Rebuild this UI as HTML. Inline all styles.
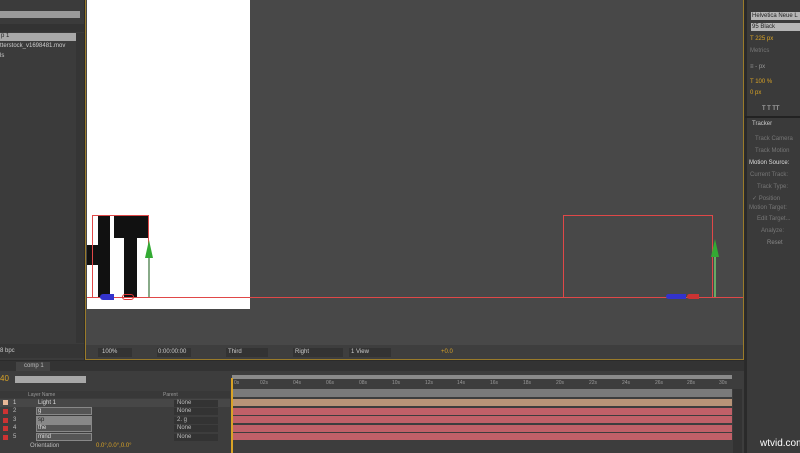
<!DOCTYPE html>
<html><head><style>
*{margin:0;padding:0;box-sizing:border-box}
body{width:800px;height:453px;background:#2b2b2b;position:relative;overflow:hidden;font-family:"Liberation Sans",sans-serif;font-size:6px;color:#bbb}
.a{position:absolute}
.t{position:absolute;white-space:nowrap}
.bar{position:absolute;background:#c06068;height:7px}
.r{position:absolute;color:#999;font-size:5px;top:380px}
</style></head><body>
<!-- project panel -->
<div class="a" style="left:0;top:0;width:84px;height:360px;background:#3b3b3b"></div>
<div class="a" style="left:0;top:11px;width:80px;height:7px;background:#9a9a9a"></div>
<div class="a" style="left:0;top:24px;width:84px;height:8px;background:#333"></div>
<div class="a" style="left:0;top:33px;width:76px;height:8px;background:#a8a8a8"></div>
<div class="t" style="left:1px;top:33px;color:#222">p 1</div>
<div class="t" style="left:0;top:43px;color:#ccc">tterstock_v1698481.mov</div>
<div class="t" style="left:0;top:53px;color:#ccc">ls</div>
<div class="a" style="left:76px;top:33px;width:8px;height:310px;background:#353535"></div>
<div class="a" style="left:0;top:344px;width:84px;height:14px;background:#353535"></div>
<div class="t" style="left:0;top:348px;color:#ccc">8 bpc</div>
<!-- viewer -->
<div class="a" style="left:85px;top:0;width:659px;height:360px;background:#484848;border:1px solid #9a7b2a;border-top:none"></div>
<div class="a" style="left:87px;top:0;width:163px;height:309px;background:#fff"></div>
<!-- HT letters -->
<div class="a" style="left:87px;top:245px;width:12px;height:20px;background:#111"></div>
<div class="a" style="left:98px;top:216px;width:12px;height:82px;background:#111"></div>
<div class="a" style="left:114px;top:216px;width:35px;height:22px;background:#111"></div>
<div class="a" style="left:124px;top:216px;width:13px;height:82px;background:#111"></div>
<div class="a" style="left:92px;top:215px;width:57px;height:83px;border:1px solid #e04848"></div>
<div class="a" style="left:87px;top:297px;width:656px;height:1px;background:#e04848"></div>
<div class="a" style="left:148px;top:250px;width:2px;height:47px;background:#8a8"></div>
<div class="a" style="left:145px;top:240px;width:0;height:0;border-left:4px solid transparent;border-right:4px solid transparent;border-bottom:18px solid #3a3"></div>
<div class="a" style="left:100px;top:294px;width:14px;height:6px;background:#33c;border-radius:3px 0 0 3px"></div>
<div class="a" style="left:122px;top:294px;width:12px;height:6px;border:1px solid #d33;border-radius:3px"></div>
<!-- right box -->
<div class="a" style="left:563px;top:215px;width:150px;height:83px;border:1px solid #e04848"></div>
<div class="a" style="left:714px;top:255px;width:2px;height:42px;background:#6a6"></div>
<div class="a" style="left:711px;top:239px;width:0;height:0;border-left:4px solid transparent;border-right:4px solid transparent;border-bottom:18px solid #3a3"></div>
<div class="a" style="left:666px;top:294px;width:20px;height:5px;background:#33c;border-radius:3px 0 0 3px"></div>
<div class="a" style="left:687px;top:294px;width:12px;height:5px;background:#c33;border-radius:3px 0 0 3px"></div>
<!-- viewer toolbar -->
<div class="a" style="left:86px;top:345px;width:657px;height:14px;background:#3e3e3e"></div>
<div class="a" style="left:98px;top:348px;width:34px;height:9px;background:#333"></div>
<div class="t" style="left:102px;top:349px;color:#ccc">100%</div>
<div class="a" style="left:157px;top:348px;width:34px;height:9px;background:#333"></div>
<div class="t" style="left:158px;top:349px;color:#ccc">0:00:00:00</div>
<div class="a" style="left:226px;top:348px;width:42px;height:9px;background:#333"></div>
<div class="t" style="left:228px;top:349px;color:#ccc">Third</div>
<div class="a" style="left:293px;top:348px;width:50px;height:9px;background:#333"></div>
<div class="t" style="left:295px;top:349px;color:#ccc">Right</div>
<div class="a" style="left:349px;top:348px;width:42px;height:9px;background:#333"></div>
<div class="t" style="left:351px;top:349px;color:#ccc">1 View</div>
<div class="t" style="left:441px;top:349px;color:#d9a326">+0.0</div>
<!-- right panel -->
<div class="a" style="left:745px;top:0;width:55px;height:453px;background:#3a3a3a;border-left:2px solid #2a2a2a"></div>
<div class="a" style="left:751px;top:12px;width:49px;height:8px;background:#b5b5b5"></div>
<div class="t" style="left:752px;top:13px;color:#222">Helvetica Neue L</div>
<div class="a" style="left:751px;top:23px;width:49px;height:8px;background:#b5b5b5"></div>
<div class="t" style="left:752px;top:24px;color:#222">95 Black</div>
<div class="t" style="left:750px;top:36px;color:#d9a326">T 225 px</div>
<div class="t" style="left:750px;top:48px;color:#777">  Metrics</div>
<div class="t" style="left:750px;top:64px;color:#999">≡ - px</div>
<div class="t" style="left:750px;top:79px;color:#d9a326">T 100 %</div>
<div class="t" style="left:750px;top:90px;color:#d9a326">  0 px</div>
<div class="t" style="left:762px;top:106px;color:#ccc">T  T  TT</div>
<div class="a" style="left:745px;top:116px;width:55px;height:2px;background:#222"></div>
<div class="t" style="left:752px;top:121px;color:#ccc">Tracker</div>
<div class="t" style="left:755px;top:136px;color:#777">Track Camera</div>
<div class="t" style="left:755px;top:148px;color:#777">Track Motion</div>
<div class="t" style="left:749px;top:160px;color:#ddd">Motion Source:</div>
<div class="t" style="left:750px;top:172px;color:#777">Current Track:</div>
<div class="t" style="left:757px;top:184px;color:#777">Track Type:</div>
<div class="t" style="left:752px;top:195px;color:#777">✓ Position</div>
<div class="t" style="left:749px;top:205px;color:#777">Motion Target:</div>
<div class="t" style="left:757px;top:216px;color:#777">Edit Target...</div>
<div class="t" style="left:761px;top:228px;color:#777">Analyze:</div>
<div class="t" style="left:767px;top:240px;color:#888">Reset</div>
<div class="t" style="left:760px;top:438px;color:#fff;font-size:10px">wtvid.com</div>
<!-- timeline -->
<div class="a" style="left:0;top:361px;width:744px;height:92px;background:#3d3d3d"></div>
<div class="a" style="left:0;top:361px;width:744px;height:10px;background:#333"></div>
<div class="a" style="left:16px;top:362px;width:34px;height:9px;background:#444"></div>
<div class="t" style="left:24px;top:363px;color:#bbb">comp 1</div>
<div class="t" style="left:0;top:374px;color:#d9a326;font-size:8px">40</div>
<div class="a" style="left:15px;top:376px;width:71px;height:7px;background:#a8a8a8"></div>
<div class="a" style="left:0;top:391px;width:230px;height:7px;background:#383838"></div>
<div class="t" style="left:28px;top:392px;color:#999;font-size:5px">Layer Name</div>
<div class="t" style="left:163px;top:392px;color:#999;font-size:5px">Parent</div>
<div class="a" style="left:0;top:399px;width:230px;height:8px;background:#474747"></div>
<div class="a" style="left:3px;top:400px;width:5px;height:5px;background:#e8b898"></div>
<div class="t" style="left:13px;top:400px;color:#ccc">1</div>
<div class="t" style="left:38px;top:400px;color:#ddd">Light 1</div>
<div class="a" style="left:3px;top:409px;width:5px;height:5px;background:#c33"></div><div class="t" style="left:13px;top:408px">2</div>
<div class="a" style="left:36px;top:407px;width:56px;height:8px;border:1px solid #888;background:#555"></div><div class="t" style="left:38px;top:408px;color:#ddd">g</div>
<div class="a" style="left:3px;top:418px;width:5px;height:5px;background:#c33"></div><div class="t" style="left:13px;top:417px">3</div>
<div class="a" style="left:36px;top:416px;width:56px;height:8px;background:#888"></div><div class="t" style="left:38px;top:417px;color:#222">sp</div>
<div class="a" style="left:3px;top:426px;width:5px;height:5px;background:#c33"></div><div class="t" style="left:13px;top:425px">4</div>
<div class="a" style="left:36px;top:424px;width:56px;height:8px;border:1px solid #888;background:#555"></div><div class="t" style="left:38px;top:425px;color:#ddd">the</div>
<div class="a" style="left:3px;top:435px;width:5px;height:5px;background:#c33"></div><div class="t" style="left:13px;top:434px">5</div>
<div class="a" style="left:36px;top:433px;width:56px;height:8px;border:1px solid #888;background:#555"></div><div class="t" style="left:38px;top:434px;color:#ddd">mind</div>
<div class="t" style="left:30px;top:443px;color:#bbb">Orientation</div>
<div class="t" style="left:96px;top:443px;color:#d9a326">0.0°,0.0°,0.0°</div>
<div class="a" style="left:174px;top:400px;width:44px;height:7px;background:#333"></div><div class="t" style="left:177px;top:400px">None</div>
<div class="a" style="left:174px;top:408px;width:44px;height:7px;background:#333"></div><div class="t" style="left:177px;top:408px">None</div>
<div class="a" style="left:174px;top:417px;width:44px;height:7px;background:#333"></div><div class="t" style="left:177px;top:417px">2. g</div>
<div class="a" style="left:174px;top:425px;width:44px;height:7px;background:#333"></div><div class="t" style="left:177px;top:425px">None</div>
<div class="a" style="left:174px;top:434px;width:44px;height:7px;background:#333"></div><div class="t" style="left:177px;top:434px">None</div>
<!-- time ruler -->
<div class="a" style="left:232px;top:375px;width:500px;height:4px;background:#8a8a8a"></div>
<div class="r" style="left:234px">0s</div><div class="r" style="left:260px">02s</div>
<div class="r" style="left:293px">04s</div><div class="r" style="left:326px">06s</div><div class="r" style="left:359px">08s</div><div class="r" style="left:392px">10s</div><div class="r" style="left:425px">12s</div><div class="r" style="left:457px">14s</div><div class="r" style="left:490px">16s</div><div class="r" style="left:523px">18s</div><div class="r" style="left:556px">20s</div><div class="r" style="left:589px">22s</div><div class="r" style="left:622px">24s</div><div class="r" style="left:655px">26s</div><div class="r" style="left:687px">28s</div><div class="r" style="left:719px">30s</div>
<div class="a" style="left:232px;top:389px;width:500px;height:8px;background:#7a7a7a"></div>
<div class="a" style="left:232px;top:399px;width:500px;height:7px;background:#b89478"></div>
<div class="bar" style="left:232px;top:408px;width:500px"></div>
<div class="bar" style="left:232px;top:416px;width:500px"></div>
<div class="bar" style="left:232px;top:425px;width:500px"></div>
<div class="bar" style="left:232px;top:433px;width:500px"></div>
<div class="a" style="left:231px;top:378px;width:2px;height:75px;background:#d9a326"></div>
<div class="a" style="left:733px;top:389px;width:9px;height:64px;background:#333"></div>
</body></html>
